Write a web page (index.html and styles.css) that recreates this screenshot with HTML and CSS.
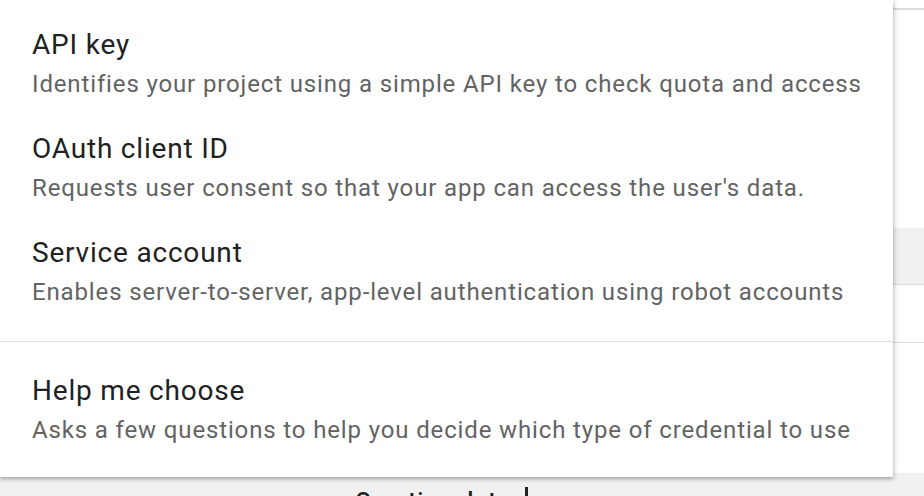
FILE: index.html
```html
<!DOCTYPE html>
<html>
<head>
<meta charset="utf-8">
<link rel="stylesheet" href="styles.css">
</head>
<body>
<div class="page">
  <div class="bg-row top-row"></div>
  <div class="bg-row spacer-a"></div>
  <div class="bg-row gray-row"></div>
  <div class="bg-row spacer-b"></div>
  <div class="bg-row spacer-c"></div>
  <div class="bg-row header-row">
    <span class="col-label">Creation date</span>
    <span class="caret"></span>
  </div>

  <div class="menu">
    <div class="menu-group">
      <div class="item">
        <div class="title">API key</div>
        <div class="desc">Identifies your project using a simple API key to check quota and access</div>
      </div>
      <div class="item">
        <div class="title">OAuth client ID</div>
        <div class="desc">Requests user consent so that your app can access the user's data.</div>
      </div>
      <div class="item">
        <div class="title">Service account</div>
        <div class="desc">Enables server-to-server, app-level authentication using robot accounts</div>
      </div>
    </div>
    <div class="divider"></div>
    <div class="menu-group last">
      <div class="item">
        <div class="title">Help me choose</div>
        <div class="desc">Asks a few questions to help you decide which type of credential to use</div>
      </div>
    </div>
  </div>
</div>
</body>
</html>
```

FILE: styles.css
```css
html, body {
  margin: 0;
  padding: 0;
  background: #ffffff;
}
body {
  font-family: Roboto, "Liberation Sans", Arial, sans-serif;
  width: 924px;
  height: 496px;
  overflow: hidden;
}
.page {
  position: relative;
  width: 924px;
  height: 496px;
  display: flex;
  flex-direction: column;
}
.bg-row {
  flex: none;
  background: #ffffff;
}
.top-row {
  height: 8px;
  border-bottom: 2px solid #dcdcdc;
}
.spacer-a {
  height: 218px;
}
.gray-row {
  height: 56px;
  background: #f1f1f1;
  border-bottom: 1px solid #dcdcdc;
}
.spacer-b {
  height: 57px;
  border-bottom: 1px solid #dcdcdc;
}
.spacer-c {
  height: 130px;
}
.header-row {
  flex: 1;
  background: #f1f1f1;
  display: flex;
  align-items: flex-start;
  padding-left: 355px;
  padding-top: 14px;
  gap: 14px;
}
.col-label {
  font-size: 24px;
  font-weight: 500;
  color: #212121;
  line-height: 28px;
  letter-spacing: 0.9px;
  white-space: nowrap;
}
.caret {
  width: 3px;
  height: 12px;
  background: #222;
}
.menu {
  position: absolute;
  left: 0;
  top: 0;
  width: 893px;
  height: 477px;
  background: #ffffff;
  box-shadow: 0 2px 4px rgba(0,0,0,0.3), 2px 0 8px rgba(0,0,0,0.08);
  display: flex;
  flex-direction: column;
}
.menu-group {
  padding-bottom: 29px;
}
.menu-group.last {
  padding-top: 4px;
  padding-bottom: 0;
}
.item {
  padding: 25px 0 0 32px;
}
.title {
  font-size: 28px;
  line-height: 40px;
  color: #212121;
  letter-spacing: 0.8px;
  white-space: nowrap;
}
.desc {
  font-size: 24px;
  line-height: 39px;
  color: #636363;
  letter-spacing: 0.86px;
  white-space: nowrap;
}
.divider {
  height: 1px;
  background: #dddddd;
}
```
